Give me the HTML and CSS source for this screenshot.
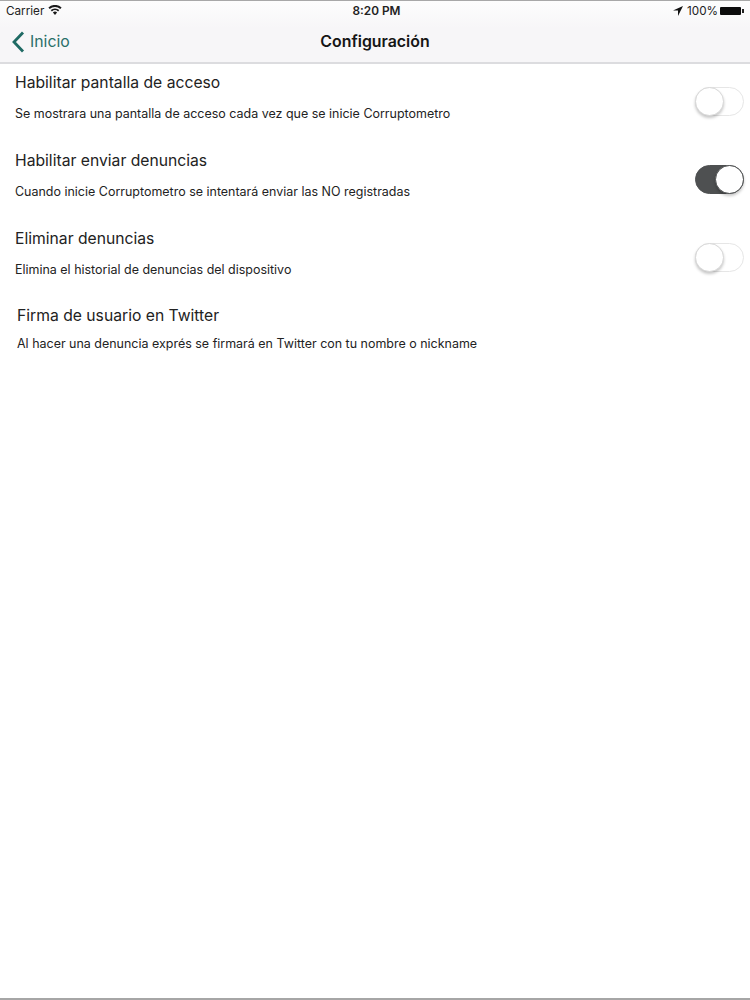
FILE: index.html
```html
<!DOCTYPE html>
<html lang="es">
<head>
<meta charset="utf-8">
<title>Configuración</title>
<link rel="stylesheet" href="styles.css">
</head>
<body>
<div class="screen">
  <header class="header">
    <div class="status">
      <div class="status-left">
        <span>Carrier</span>
        <svg class="wifi" viewBox="0 0 14 10" width="14" height="10"><path d="M7 10 4.9 7.5a3.2 3.2 0 0 1 4.2 0zM3.9 6.4 2.7 5a6.6 6.6 0 0 1 8.6 0l-1.2 1.4a4.8 4.8 0 0 0-6.2 0zM1.7 3.9.4 2.4a10 10 0 0 1 13.2 0l-1.3 1.5a8.2 8.2 0 0 0-10.6 0z" fill="#1a1a1a"/></svg>
      </div>
      <div class="status-time">8:20 PM</div>
      <div class="status-right">
        <svg class="arrow" viewBox="0 0 10 10" width="10" height="10"><path d="M10 0 0 4.4h5V10z" fill="#111"/></svg>
        <span>100%</span>
        <span class="battery"><span class="battery-cap"></span></span>
      </div>
    </div>
    <nav class="nav">
      <div class="back">
        <svg viewBox="0 0 13 22" width="13" height="22"><path d="M11 1.5 2 11l9 9.5" fill="none" stroke="#1f6a64" stroke-width="2.8"/></svg>
        <span class="back-label">Inicio</span>
      </div>
      <div class="nav-title">Configuración</div>
    </nav>
  </header>
  <main class="list">
    <section class="row">
      <div class="row-text">
        <h2>Habilitar pantalla de acceso</h2>
        <p>Se mostrara una pantalla de acceso cada vez que se inicie Corruptometro</p>
      </div>
      <div class="toggle"><span class="knob"></span></div>
    </section>
    <section class="row">
      <div class="row-text">
        <h2>Habilitar enviar denuncias</h2>
        <p>Cuando inicie Corruptometro se intentará enviar las NO registradas</p>
      </div>
      <div class="toggle on"><span class="knob"></span></div>
    </section>
    <section class="row">
      <div class="row-text">
        <h2>Eliminar denuncias</h2>
        <p>Elimina el historial de denuncias del dispositivo</p>
      </div>
      <div class="toggle"><span class="knob"></span></div>
    </section>
    <section class="row signature">
      <div class="row-text">
        <h2>Firma de usuario en Twitter</h2>
        <p>Al hacer una denuncia exprés se firmará en Twitter con tu nombre o nickname</p>
      </div>
    </section>
  </main>
</div>
</body>
</html>
```
FILE: styles.css
```css
html, body { margin: 0; padding: 0; background: #fff; }
.screen {
  width: 750px; height: 1000px; box-sizing: border-box;
  display: flex; flex-direction: column;
  border-bottom: 2px solid #a6a6a6;
  font-family: Inter, "Liberation Sans", sans-serif;
  color: #1c1c1c; overflow: hidden;
}
.header {
  height: 64px; box-sizing: border-box; flex: none;
  background: linear-gradient(#fdfdfd, #f7f6f8 45%);
  border-top: 1px solid #a8a8a8;
  border-bottom: 2px solid #dcdcdf;
}
.status {
  height: 19px; padding: 0 6px; display: grid;
  grid-template-columns: 1fr auto 1fr; align-items: center;
  font-size: 11.7px; color: #222;
}
.status-left { display: flex; align-items: center; gap: 4px; }
.wifi { margin-top: -2px; }
.status-time { font-weight: 600; font-size: 11.8px; padding-left: 3px; }
.status-right { display: flex; justify-content: flex-end; align-items: center; gap: 5px; }
.arrow { margin-right: -1px; }
.battery { position: relative; width: 21px; height: 8px; background: #0c0c0c; border-radius: 1px; margin-right: 3px; margin-left: -3px; }
.battery-cap { position: absolute; left: 22px; top: 2px; width: 1.5px; height: 4px; background: #222; }
.nav { position: relative; height: 42px; display: flex; align-items: center; justify-content: center; }
.back {
  position: absolute; left: 12px; top: 10px; display: flex; align-items: center; gap: 5px;
  color: #2a6f69; font-size: 15.8px; line-height: 22px;
}
.back-label { padding-top: 1px; }
.nav-title { font-size: 15.9px; font-weight: 600; color: #151515; }
.list { display: flex; flex-direction: column; padding-top: 6px; }
.row {
  height: 78px; box-sizing: border-box; padding: 0 6px 0 15px;
  display: flex; justify-content: space-between; align-items: flex-start;
}
.row-text { padding-top: 2px; }
.row h2 { margin: 0; font-size: 15.7px; font-weight: 400; line-height: 22px; color: #222; }
.row p { margin: 11px 0 0; font-size: 12.47px; line-height: 18px; color: #222; }
.signature { padding-left: 17px; margin-top: -1px; }
.signature p { margin-top: 8px; }
.toggle {
  position: relative; width: 49px; height: 29px; box-sizing: border-box; margin-top: 17px;
  border: 1px solid #e6e6e6; border-radius: 15px; background: #fff;
}
.toggle .knob {
  position: absolute; left: -1px; top: -1px; width: 29px; height: 29px; box-sizing: border-box;
  border-radius: 50%; background: #fff; border: 1px solid #d8d8d8;
  box-shadow: 0 2px 3px rgba(0,0,0,.22);
}
.toggle.on { background: #4e5051; border-color: #4e5051; }
.toggle.on .knob { left: 19px; border-color: #4e5051; }
```
